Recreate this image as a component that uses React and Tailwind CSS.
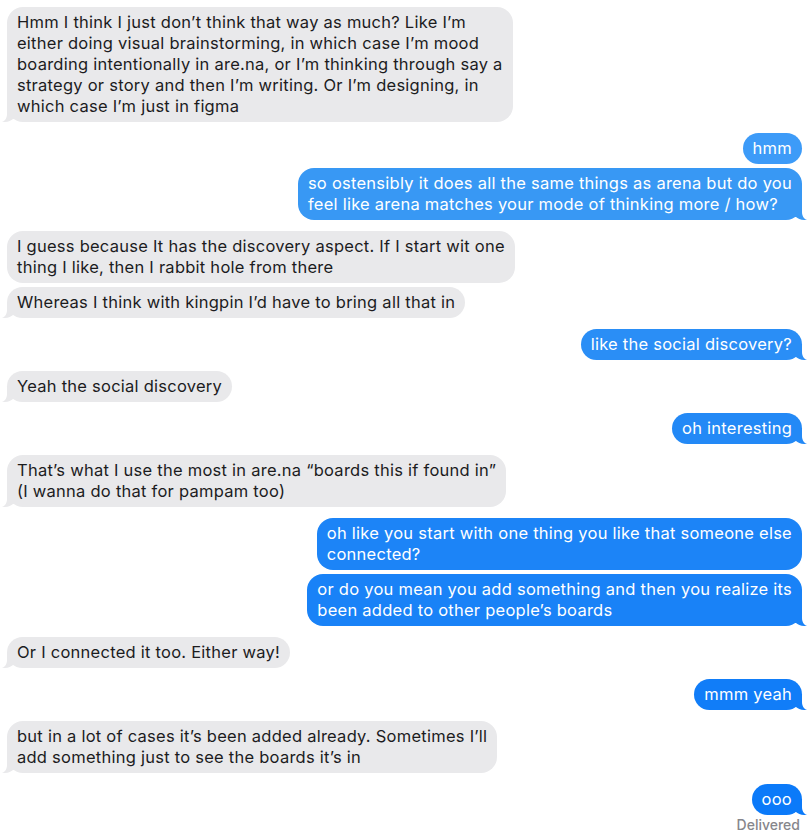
import React from 'react';

const messages = [
  { from: 'them', lines: ['Hmm I think I just don’t think that way as much? Like I’m', 'either doing visual brainstorming, in which case I’m mood', 'boarding intentionally in are.na, or I’m thinking through say a', 'strategy or story and then I’m writing. Or I’m designing, in', 'which case I’m just in figma'] },
  { from: 'me', lines: ['hmm'], color: '#3d9bf8' },
  { from: 'me', lines: ['so ostensibly it does all the same things as arena but do you', 'feel like arena matches your mode of thinking more / how?'], color: '#3898f4' },
  { from: 'them', lines: ['I guess because It has the discovery aspect. If I start wit one', 'thing I like, then I rabbit hole from there'] },
  { from: 'them', lines: ['Whereas I think with kingpin I’d have to bring all that in'] },
  { from: 'me', lines: ['like the social discovery?'], color: '#2a8ef6' },
  { from: 'them', lines: ['Yeah the social discovery'] },
  { from: 'me', lines: ['oh interesting'], color: '#2389f6' },
  { from: 'them', lines: ['That’s what I use the most in are.na “boards this if found in”', '(I wanna do that for pampam too)'] },
  { from: 'me', lines: ['oh like you start with one thing you like that someone else', 'connected?'], color: '#1c84f7' },
  { from: 'me', lines: ['or do you mean you add something and then you realize its', 'been added to other people’s boards'], color: '#1982f7' },
  { from: 'them', lines: ['Or I connected it too. Either way!'] },
  { from: 'me', lines: ['mmm yeah'], color: '#117df8' },
  { from: 'them', lines: ['but in a lot of cases it’s been added already. Sometimes I’ll', 'add something just to see the boards it’s in'] },
  { from: 'me', lines: ['ooo'], color: '#0b7af9' },
];

const GRAY = '#e9e9eb';

function Tail({ side, color }) {
  if (side === 'left') {
    return (
      <svg className="absolute bottom-0 left-[-5px]" width="16" height="16" viewBox="0 0 16 16">
        <path d="M5 0 V8 C5 12 3 15 0 16 C5 16.3 9 15 11 13 L16 13 L16 0 Z" fill={color} />
      </svg>
    );
  }
  return (
    <svg className="absolute bottom-0 right-[-5px]" width="16" height="16" viewBox="0 0 16 16">
      <path d="M11 0 V8 C11 12 13 15 16 16 C11 16.3 7 15 5 13 L0 13 L0 0 Z" fill={color} />
    </svg>
  );
}

function Bubble({ msg, last }) {
  const mine = msg.from === 'me';
  const color = mine ? msg.color : GRAY;
  return (
    <div className={`flex ${mine ? 'justify-end pr-[9px]' : 'justify-start pl-[7px]'}`}>
      <div
        className={`relative rounded-[16px] px-[10px] py-[5px] text-[16.5px] leading-[21px] tracking-[0.25px] whitespace-nowrap ${mine ? 'text-white' : 'text-[#1c1c1e]'}`}
        style={{ backgroundColor: color }}
      >
        {last && <Tail side={mine ? 'right' : 'left'} color={color} />}
        <div className="relative">
          {msg.lines.map((l, i) => (
            <div key={i}>{l}</div>
          ))}
        </div>
      </div>
    </div>
  );
}

export default function App() {
  return (
    <div className="w-[811px] h-[837px] bg-white overflow-hidden pt-[7px] font-['Inter','Liberation_Sans',Arial,sans-serif]">
      {messages.map((m, i) => {
        const next = messages[i + 1];
        const prev = messages[i - 1];
        const last = !next || next.from !== m.from;
        const gap = !prev ? '' : prev.from === m.from ? 'mt-[4px]' : 'mt-[11px]';
        return (
          <div key={i} className={gap}>
            <Bubble msg={m} last={last} />
          </div>
        );
      })}
      <div className="text-right pr-[11px] mt-[1px] text-[14px] leading-[18px] font-medium text-[#86868b]">Delivered</div>
    </div>
  );
}
